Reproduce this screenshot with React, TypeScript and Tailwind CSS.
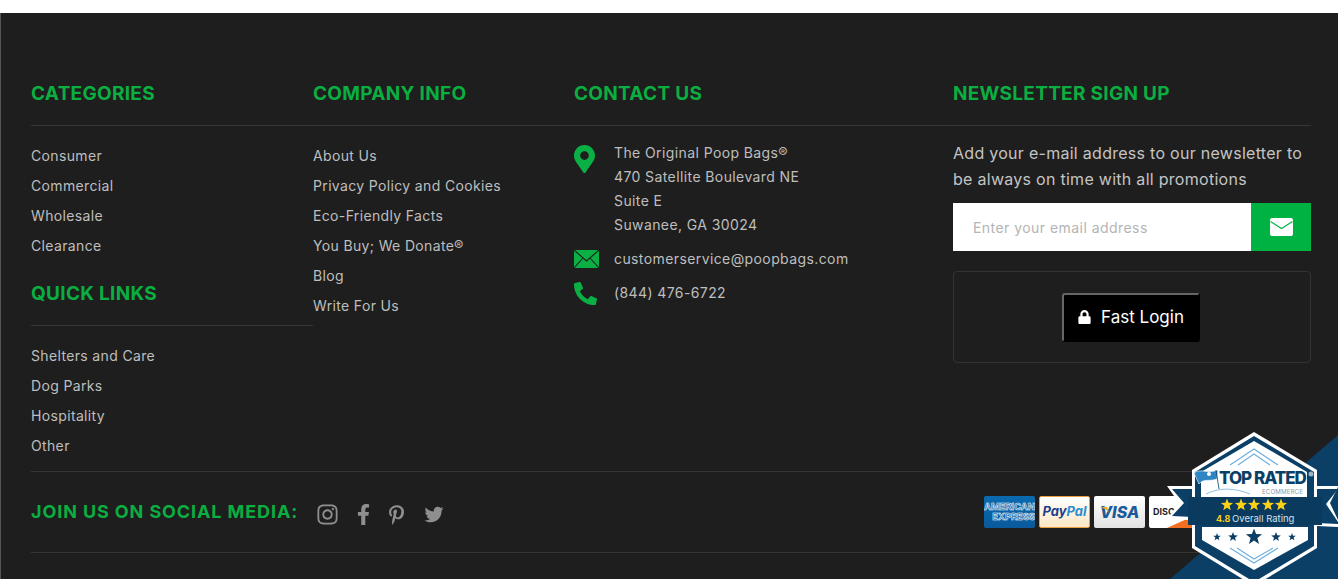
import React from "react";
import { FaInstagram, FaFacebookF, FaPinterestP, FaTwitter, FaMapMarkerAlt, FaPhoneAlt, FaLock } from "react-icons/fa";

const Heading = ({ children, className = "" }: { children: React.ReactNode; className?: string }) => (
  <h3 className={"h-[47px] border-b border-[#353535] pt-[1px] text-[19px] leading-[28px] font-bold tracking-[0.3px] text-[#0aae41] " + className}>{children}</h3>
);

const Links = ({ items }: { items: string[] }) => (
  <ul className="mt-[15px] text-[14px] leading-[30px] tracking-[0.35px] text-[#bebebe]">
    {items.map((t) => (
      <li key={t}>{t}</li>
    ))}
  </ul>
);

const Star = ({ x, y, r, fill }: { x: number; y: number; r: number; fill: string }) => {
  const pts: string[] = [];
  for (let i = 0; i < 10; i++) {
    const a = -Math.PI / 2 + (i * Math.PI) / 5;
    const q = i % 2 === 0 ? r : r * 0.42;
    pts.push(`${x + q * Math.cos(a)},${y + q * Math.sin(a)}`);
  }
  return <polygon points={pts.join(" ")} fill={fill} />;
};

const Badge = () => (
  <svg className="absolute right-0 bottom-0 h-[154px] w-[178px]" viewBox="1160 425 178 154">
    <polygon points="1338,435 1338,579 1170,579" fill="#0b3f66" />
    <polygon points="1167,486 1338,486 1338,487 1330,503 1338,520 1338,527 1167,519 1179,503" fill="#ffffff" />
    <polygon points="1172,489 1338,489 1326,504 1338,522 1338,524 1172,516 1184,503" fill="#0b3f66" />
    <polygon points="1254,432 1317,470 1317,548 1254,586 1192,548 1192,470" fill="#ffffff" />
    <polygon points="1254,436 1314,472 1314,546 1254,582 1195,546 1195,472" fill="#0b3f66" />
    <polygon points="1254,441 1307,472 1307,497 1201,497 1201,472" fill="#ffffff" />
    <rect x="1188" y="497" width="134" height="28" fill="#0a3a5e" />
    <polygon points="1202,527 1308,527 1308,540 1254,570 1202,540" fill="#ffffff" />
    <path d="M1230 548 L1254 563 L1278 548 M1237 548 L1254 559 L1273 548" stroke="#6fb0dd" strokeWidth="1.2" fill="none" />
    <path d="M1230 465 L1254 449 L1278 465 M1238 465 L1254 454 L1270 465" stroke="#6fb0dd" strokeWidth="1.2" fill="none" />
    <path d="M1206 494 C1220 487 1235 488 1250 494" stroke="#6fb0dd" strokeWidth="0.8" fill="none" />
    <text x="1219" y="484" fontFamily="Inter, sans-serif" fontWeight="800" fontSize="17" letterSpacing="-1" fill="#0b3f66">TOP RATED</text>
    <path d="M1194 473 C1200 468 1207 474 1218 470 L1217 479 C1209 482 1204 478 1199 484 Z" fill="#2f85c4" stroke="#ffffff" strokeWidth="0.6" />
    <path d="M1216 470 L1219 489" stroke="#0b3f66" strokeWidth="0.8" />
    <circle cx="1209" cy="474" r="2" fill="#ffffff" />
    <circle cx="1311" cy="474" r="2.5" fill="#9fb3c2" />
    <text x="1262" y="494" fontFamily="Inter, sans-serif" fontSize="6.2" letterSpacing="0.1" fill="#8a99a5">ECOMMERCE</text>
    {[1227, 1241, 1254, 1268, 1281].map((x) => (
      <Star key={x} x={x} y={505} r={6.4} fill="#fcd116" />
    ))}
    <text x="1216" y="521.5" fontFamily="Inter, sans-serif" fontWeight="700" fontSize="9" fill="#fcd116">4.8</text>
    <text x="1232" y="521.5" fontFamily="Inter, sans-serif" fontSize="9.5" fill="#d8e2ea">Overall Rating</text>
    <Star x={1217} y={537} r={4} fill="#0b3f66" />
    <Star x={1233} y={537} r={5} fill="#0b3f66" />
    <Star x={1254} y={537} r={8.5} fill="#0b3f66" />
    <Star x={1276} y={537} r={5} fill="#0b3f66" />
    <Star x={1292} y={537} r={4} fill="#0b3f66" />
  </svg>
);

const Card = ({ className = "", children }: { className?: string; children: React.ReactNode }) => (
  <div className={"relative flex h-[32px] w-[51px] flex-none items-center justify-center overflow-hidden rounded-[2px] " + className}>{children}</div>
);

export default function App() {
  return (
    <div className="relative h-[579px] w-[1338px] overflow-hidden bg-white font-['Inter',sans-serif]">
      <div className="mt-[13px] h-[566px] border-l border-[#555] bg-[#1e1e1e] pt-[66px] pr-[27px] pl-[30px]">
        <div className="flex h-[392px]">
          <div className="w-[282px] flex-none">
            <Heading>CATEGORIES</Heading>
            <Links items={["Consumer", "Commercial", "Wholesale", "Clearance"]} />
            <Heading className="mt-[18px]">QUICK LINKS</Heading>
            <Links items={["Shelters and Care", "Dog Parks", "Hospitality", "Other"]} />
          </div>
          <div className="w-[261px] flex-none">
            <Heading>COMPANY INFO</Heading>
            <Links items={["About Us", "Privacy Policy and Cookies", "Eco-Friendly Facts", "You Buy; We Donate®", "Blog", "Write For Us"]} />
          </div>
          <div className="w-[379px] flex-none">
            <Heading>CONTACT US</Heading>
            <div className="mt-[15px] flex text-[14px] leading-[24px] tracking-[0.4px] text-[#bebebe]">
              <div className="w-[40px] pt-[4px] text-[#0ab044]">
                <FaMapMarkerAlt className="h-[28px] w-[21px]" />
              </div>
              <div>
                The Original Poop Bags®
                <br />
                470 Satellite Boulevard NE
                <br />
                Suite E
                <br />
                Suwanee, GA 30024
              </div>
            </div>
            <div className="mt-[10px] flex items-center text-[14px] leading-[24px] tracking-[0.4px] text-[#bebebe]">
              <div className="w-[40px]">
                <svg width="25" height="18" viewBox="0 0 25 18">
                  <rect width="25" height="18" fill="#0ab044" />
                  <path d="M0 0 L12.5 11 L25 0 M0 18 L9 8 M25 18 L16 8" stroke="#1e1e1e" strokeWidth="1.1" fill="none" />
                </svg>
              </div>
              <span>customerservice@poopbags.com</span>
            </div>
            <div className="mt-[10px] flex items-center text-[14px] leading-[24px] tracking-[0.4px] text-[#bebebe]">
              <div className="w-[40px] text-[#0ab044]">
                <FaPhoneAlt className="h-[23px] w-[23px]" />
              </div>
              <span>(844) 476-6722</span>
            </div>
          </div>
          <div className="w-[358px] flex-none">
            <Heading>NEWSLETTER SIGN UP</Heading>
            <p className="mt-[14px] text-[16px] leading-[26px] tracking-[0.28px] text-[#c4c4c4]">
              Add your e-mail address to our newsletter to be always on time with all promotions
            </p>
            <div className="mt-[11px] flex h-[48px]">
              <div className="flex flex-1 items-center bg-white pl-[20px] text-[14px] tracking-[0.45px] text-[#b4b4b4]">Enter your email address</div>
              <div className="flex w-[60px] items-center justify-center bg-[#00b241]">
                <svg width="23" height="18" viewBox="0 0 23 18">
                  <rect width="23" height="18" rx="2" fill="#ffffff" />
                  <path d="M0.5 3.5 L11.5 10.5 L22.5 3.5" stroke="#00b241" strokeWidth="1.1" fill="none" />
                </svg>
              </div>
            </div>
            <div className="mt-[20px] flex h-[92px] items-center justify-center rounded-[4px] border border-[#333]">
              <div className="mr-[2px] flex h-[49px] w-[138px] items-center justify-center gap-[10px] rounded-[3px] border-2 border-[#666] border-r-black border-b-black bg-black text-[17px] text-white">
                <FaLock className="h-[14px] w-[13px]" />
                <span className="mt-[2px]">Fast Login</span>
              </div>
            </div>
          </div>
        </div>
        <div className="flex h-[82px] items-center justify-between border-y border-[#353535]">
          <div className="flex items-center">
            <span className="mt-[-2px] text-[18px] font-bold tracking-[0.9px] text-[#0aae41]">JOIN US ON SOCIAL MEDIA:</span>
            <div className="mt-[5px] ml-[19px] flex items-center text-[#8f8f8f]">
              <FaInstagram className="h-[23px] w-[21px]" />
              <FaFacebookF className="ml-[19px] h-[21px] w-[13px]" />
              <FaPinterestP className="ml-[18px] h-[20px] w-[17px]" />
              <FaTwitter className="ml-[19px] h-[19px] w-[20px]" />
            </div>
          </div>
          <div className="mr-[-27px] flex w-[354px] gap-[4px] overflow-hidden">
            <Card className="flex-col bg-gradient-to-b from-[#0a6bb0] to-[#0a5a9c] text-[9.5px] leading-[10px] font-bold tracking-[-0.1px] text-[#0a64ab] [-webkit-text-stroke:0.5px_#ffffff]">
              <span>AMERICAN</span>
              <span className="self-end">EXPRESS</span>
            </Card>
            <Card className="border border-[#e8a043] bg-gradient-to-b from-white to-[#fde7c5] text-[13px] font-bold italic">
              <span className="text-[#1a3e8c]">Pay</span>
              <span className="text-[#2c8dd0]">Pal</span>
            </Card>
            <Card className="bg-gradient-to-b from-white to-[#e2e2e2] text-[16px] font-extrabold italic text-[#1a5a9a]">
              <svg className="absolute top-[11px] left-[6px] h-[6px] w-[10px]" viewBox="0 0 10 6">
                <path d="M0 0 L7 0 L9 6 C7 3 4 1 0 0 Z" fill="#f2ae1c" />
              </svg>
              <span>VISA</span>
            </Card>
            <Card className="justify-start bg-white pl-[4px] text-[9px] font-bold text-[#222]">
              DISCOVER
              <svg className="absolute right-0 bottom-0 h-[15px] w-[33px]" viewBox="0 0 33 15">
                <polygon points="0,15 33,0 33,15" fill="#f26f21" />
              </svg>
            </Card>
          </div>
        </div>
      </div>
      <Badge />
    </div>
  );
}
